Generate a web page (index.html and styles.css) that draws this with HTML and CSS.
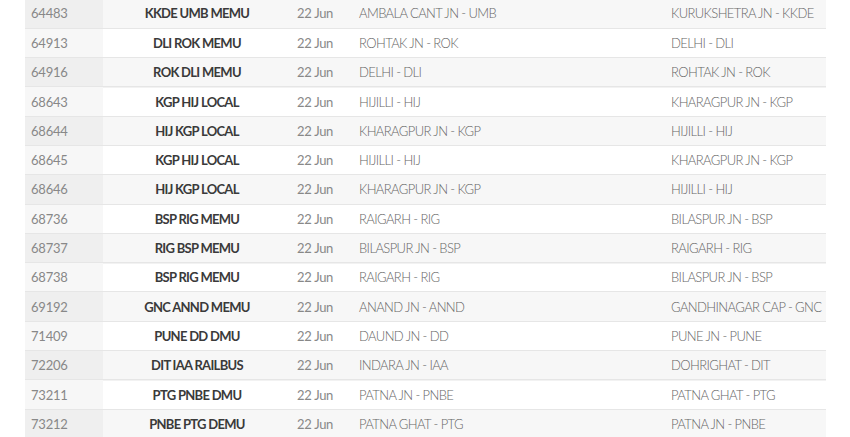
FILE: index.html
```html
<!DOCTYPE html>
<html>
<head>
<meta charset="utf-8">
<link rel="stylesheet" href="styles.css">
</head>
<body>
<table class="trains">
<tbody>
<tr><td class="num">64483</td><td class="name">KKDE UMB MEMU</td><td class="date">22 Jun</td><td class="stn">AMBALA CANT JN - UMB</td><td class="stn">KURUKSHETRA JN - KKDE</td></tr>
<tr><td class="num">64913</td><td class="name">DLI ROK MEMU</td><td class="date">22 Jun</td><td class="stn">ROHTAK JN - ROK</td><td class="stn">DELHI - DLI</td></tr>
<tr><td class="num">64916</td><td class="name">ROK DLI MEMU</td><td class="date">22 Jun</td><td class="stn">DELHI - DLI</td><td class="stn">ROHTAK JN - ROK</td></tr>
<tr><td class="num">68643</td><td class="name">KGP HIJ LOCAL</td><td class="date">22 Jun</td><td class="stn">HIJILLI - HIJ</td><td class="stn">KHARAGPUR JN - KGP</td></tr>
<tr><td class="num">68644</td><td class="name">HIJ KGP LOCAL</td><td class="date">22 Jun</td><td class="stn">KHARAGPUR JN - KGP</td><td class="stn">HIJILLI - HIJ</td></tr>
<tr><td class="num">68645</td><td class="name">KGP HIJ LOCAL</td><td class="date">22 Jun</td><td class="stn">HIJILLI - HIJ</td><td class="stn">KHARAGPUR JN - KGP</td></tr>
<tr><td class="num">68646</td><td class="name">HIJ KGP LOCAL</td><td class="date">22 Jun</td><td class="stn">KHARAGPUR JN - KGP</td><td class="stn">HIJILLI - HIJ</td></tr>
<tr><td class="num">68736</td><td class="name">BSP RIG MEMU</td><td class="date">22 Jun</td><td class="stn">RAIGARH - RIG</td><td class="stn">BILASPUR JN - BSP</td></tr>
<tr><td class="num">68737</td><td class="name">RIG BSP MEMU</td><td class="date">22 Jun</td><td class="stn">BILASPUR JN - BSP</td><td class="stn">RAIGARH - RIG</td></tr>
<tr><td class="num">68738</td><td class="name">BSP RIG MEMU</td><td class="date">22 Jun</td><td class="stn">RAIGARH - RIG</td><td class="stn">BILASPUR JN - BSP</td></tr>
<tr><td class="num">69192</td><td class="name">GNC ANND MEMU</td><td class="date">22 Jun</td><td class="stn">ANAND JN - ANND</td><td class="stn">GANDHINAGAR CAP - GNC</td></tr>
<tr><td class="num">71409</td><td class="name">PUNE DD DMU</td><td class="date">22 Jun</td><td class="stn">DAUND JN - DD</td><td class="stn">PUNE JN - PUNE</td></tr>
<tr><td class="num">72206</td><td class="name">DIT IAA RAILBUS</td><td class="date">22 Jun</td><td class="stn">INDARA JN - IAA</td><td class="stn">DOHRIGHAT - DIT</td></tr>
<tr><td class="num">73211</td><td class="name">PTG PNBE DMU</td><td class="date">22 Jun</td><td class="stn">PATNA JN - PNBE</td><td class="stn">PATNA GHAT - PTG</td></tr>
<tr><td class="num">73212</td><td class="name">PNBE PTG DEMU</td><td class="date">22 Jun</td><td class="stn">PATNA GHAT - PTG</td><td class="stn">PATNA JN - PNBE</td></tr>
</tbody>
</table>
</body>
</html>
```
FILE: styles.css
```css
html, body {
  margin: 0;
  padding: 0;
  background: #ffffff;
}
body {
  font-family: Lato, "Open Sans", sans-serif;
  font-size: 13px;
  color: #777;
}
.trains {
  border-collapse: collapse;
  margin: -1px 0 0 25px;
  width: 801px;
  table-layout: fixed;
}
.trains tr {
  height: 29.3px;
  border-bottom: 1px solid #e6e6e6;
  box-shadow: 0 1px 0 #f2f2f2;
}
.trains tr:nth-child(odd) {
  background: #f7f7f7;
}
.trains td {
  padding: 0 6px;
  vertical-align: middle;
  white-space: nowrap;
}
.trains td.num {
  width: 66px;
  letter-spacing: -0.2px;
  color: #888;
  background: #f7f7f7;
}
.trains tr:nth-child(odd) td.num {
  background: #efefef;
}
.trains td.name {
  width: 176px;
  text-align: center;
  font-weight: 700;
  letter-spacing: -0.7px;
  color: #3a3a3a;
}
.trains td.date {
  width: 50px;
  letter-spacing: -0.3px;
  color: #888;
}
.trains td.stn {
  color: #666;
  font-weight: 300;
  letter-spacing: -0.6px;
}
.trains td.stn:nth-child(4) {
  width: 300px;
}
```
